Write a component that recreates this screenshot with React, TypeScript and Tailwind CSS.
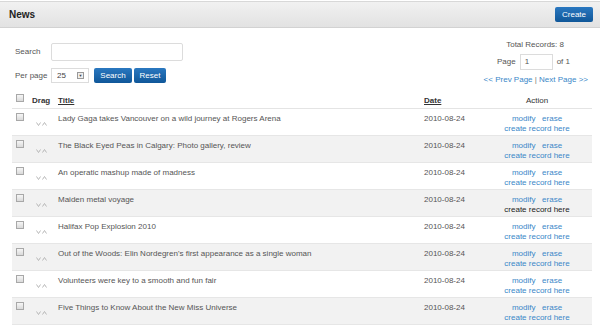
import React from "react";

const rows = [
  "Lady Gaga takes Vancouver on a wild journey at Rogers Arena",
  "The Black Eyed Peas in Calgary: Photo gallery, review",
  "An operatic mashup made of madness",
  "Maiden metal voyage",
  "Halifax Pop Explosion 2010",
  "Out of the Woods: Elin Nordegren's first appearance as a single woman",
  "Volunteers were key to a smooth and fun fair",
  "Five Things to Know About the New Miss Universe",
];

function Check() {
  return <span className="block w-[8px] h-[8px] border border-[#a8a8a8] bg-gradient-to-b from-[#f6f6f6] to-[#dadada]" />;
}

function Drag() {
  return (
    <svg width="11" height="4" viewBox="0 0 11 4" className="block">
      <path d="M0.5 0.5 L2.5 3.5 L4.5 0.5" fill="none" stroke="#b0b0b0" strokeWidth="0.9" />
      <path d="M6.5 3.5 L8.5 0.5 L10.5 3.5" fill="none" stroke="#b0b0b0" strokeWidth="0.9" />
    </svg>
  );
}

const btn = "h-[15px] rounded-[2px] bg-gradient-to-b from-[#2a78c0] to-[#0f5799] text-white text-[8px] leading-none";

export default function App() {
  return (
    <div className="w-[600px] h-[327px] bg-white overflow-hidden text-[8px] leading-[10px] text-[#555] font-['Liberation_Sans',Arial,sans-serif]">
      <div className="mt-[1px] h-[27px] border-t border-[#d8d8d8] border-b border-b-[#d2d2d2] bg-gradient-to-b from-[#f1f1f1] to-[#e2e2e2] flex items-center justify-between pl-[9px] pr-[7px]">
        <span className="text-[10px] font-bold text-[#222]">News</span>
        <button className={`${btn} w-[38px]`}>Create</button>
      </div>

      <div className="flex justify-between pl-[15px] pr-[12px] pt-[15px]">
        <div className="flex flex-col gap-[7px]">
          <div className="flex items-center">
            <span className="w-[36px] whitespace-nowrap">Search</span>
            <span className="w-[132px] h-[18px] border border-[#dcdcdc] rounded-[2px]" />
          </div>
          <div className="flex items-center">
            <span className="w-[36px] whitespace-nowrap">Per page</span>
            <span className="w-[38px] h-[15px] border border-[#dcdcdc] flex items-center justify-between pl-[5px] pr-[4px] text-[#444]">
              25
              <span className="w-[7px] h-[7px] border border-[#999] bg-[#eee] flex items-center justify-center text-[4px] leading-none">▼</span>
            </span>
            <button className={`${btn} ml-[5px] w-[38px]`}>Search</button>
            <button className={`${btn} ml-[2px] w-[32px]`}>Reset</button>
          </div>
        </div>
        <div className="flex flex-col items-end -mt-[3px]">
          <span className="mr-[24px] whitespace-nowrap">Total Records: 8</span>
          <div className="flex items-center mr-[18px] mt-[4px] whitespace-nowrap">
            <span>Page</span>
            <span className="ml-[4px] w-[33px] h-[16px] border border-[#dcdcdc] pl-[4px] leading-[14px]">1</span>
            <span className="ml-[4px]">of 1</span>
          </div>
          <span className="text-[#3a87c8] mt-[5px] whitespace-nowrap">&lt;&lt; Prev Page <span className="text-[#777]">|</span> Next Page &gt;&gt;</span>
        </div>
      </div>

      <table className="ml-[12px] mt-[8px] w-[580px] border-collapse table-fixed">
        <colgroup>
          <col className="w-[18px]" />
          <col className="w-[26px]" />
          <col className="w-[366px]" />
          <col className="w-[70px]" />
          <col className="w-[100px]" />
        </colgroup>
        <thead>
          <tr className="h-[15px] border-b border-[#e4e4e4]">
            <th className="pl-[4px] align-top pt-[1px]"><Check /></th>
            <th className="text-left font-bold text-[#333] pl-[2px] align-top pt-[3px]">Drag</th>
            <th className="text-left font-bold text-[#333] pl-[2px] align-top pt-[3px]"><span className="underline">Title</span></th>
            <th className="text-left font-bold text-[#333] pl-[2px] align-top pt-[3px]"><span className="underline">Date</span></th>
            <th className="text-center font-normal text-[#333] pr-[10px] align-top pt-[3px]">Action</th>
          </tr>
        </thead>
        <tbody>
          {rows.map((t, i) => (
            <tr key={i} className={`h-[27px] border-b border-[#e6e6e6] ${i % 2 ? "bg-[#f2f2f2]" : "bg-white"}`}>
              <td className="pl-[4px] align-top pt-[4px]"><Check /></td>
              <td className="align-top pt-[13px] pl-[6px]"><Drag /></td>
              <td className="align-top pt-[5px] pl-[2px] whitespace-nowrap">{t}</td>
              <td className="align-top pt-[5px] pl-[2px]">2010-08-24</td>
              <td className="align-top pt-[5px] pr-[10px] text-center whitespace-nowrap">
                <div className="text-[#3a87c8]">modify&nbsp;&nbsp;&nbsp;erase</div>
                <div className={i === 3 ? "text-[#222]" : "text-[#3a87c8]"}>create record here</div>
              </td>
            </tr>
          ))}
        </tbody>
      </table>
    </div>
  );
}
